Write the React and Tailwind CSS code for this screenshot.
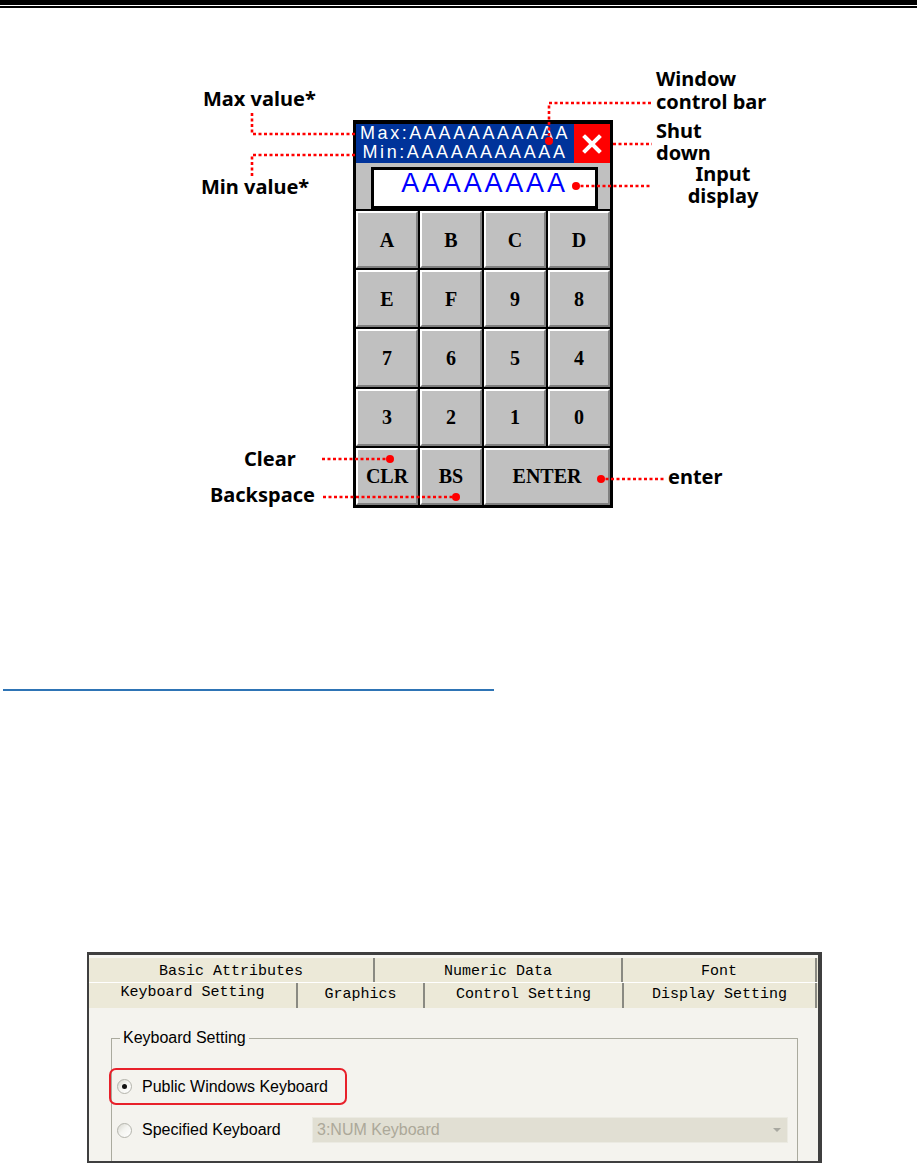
import React from "react";

const Key = ({ label, span }) => (
  <div
    className={
      "bg-[#c0c0c0] border-t-2 border-l-2 border-white border-b-2 border-r-2 border-b-[#808080] border-r-[#808080] flex items-center justify-center font-['Liberation_Serif',serif] font-bold text-[20px] text-black " +
      (span ? "col-span-2" : "")
    }
  >
    {label}
  </div>
);

const Radio = ({ checked }) => (
  <span className="w-[15px] h-[15px] rounded-full border border-[#b4b4ac] bg-[linear-gradient(135deg,#d6d6ce_0%,#f4f4f0_45%,#ffffff_100%)] flex items-center justify-center shrink-0">
    {checked && <span className="w-[5px] h-[5px] rounded-full bg-[#111111]" />}
  </span>
);

const Tab = ({ w, children }) => (
  <div
    style={{ width: w }}
    className="h-full flex items-center justify-center border-r-2 border-[#8a8a82] shrink-0"
  >
    {children}
  </div>
);

export default function App() {
  const keys = ["A", "B", "C", "D", "E", "F", "9", "8", "7", "6", "5", "4", "3", "2", "1", "0", "CLR", "BS"];
  return (
    <div className="relative w-[917px] h-[1164px] bg-white overflow-hidden">
      {/* header rules */}
      <div className="h-[5px] bg-black" />
      <div className="mt-[1px] h-[2px] bg-black" />

      {/* keyboard diagram */}
      <div className="h-[512px] pt-[112px] pl-[353px]">
        <div className="w-[260px] h-[388px] border-[3px] border-t-4 border-black bg-black flex flex-col">
          <div className="flex h-[39px] shrink-0">
            <div className="flex-1 bg-[#00339a] flex flex-col items-center text-white text-[18px] leading-[19px] tracking-[2.6px] font-['Liberation_Sans',Arial,sans-serif]">
              <span>Max:AAAAAAAAAAA</span>
              <span>Min:AAAAAAAAAAA</span>
            </div>
            <div className="w-[36px] bg-[#ff0000] flex items-center justify-center">
              <svg width="20" height="20" viewBox="0 0 20 20">
                <path d="M3 3 L17 17 M17 3 L3 17" stroke="#ffffff" strokeWidth="4" strokeLinecap="square" />
              </svg>
            </div>
          </div>
          <div className="h-[46px] shrink-0 bg-[#c0c0c0] pl-[15px] pr-[12px] pt-[4px]">
            <div className="h-[42px] border-[3px] border-black bg-white flex justify-center">
              <span className="text-[27px] leading-[27px] tracking-[2.8px] text-[#0000ff] font-['Liberation_Sans',Arial,sans-serif]">
                AAAAAAAA
              </span>
            </div>
          </div>
          <div className="flex-1 grid grid-cols-4 grid-rows-5 gap-[2px] pt-[2px]">
            {keys.map((k) => (
              <Key key={k} label={k} />
            ))}
            <Key label="ENTER" span />
          </div>
        </div>
      </div>

      {/* leader lines */}
      <svg className="absolute left-0 top-0 pointer-events-none" width="917" height="520">
        <g stroke="#ff0000" strokeWidth="2.6" strokeDasharray="3 2.5" fill="none">
          <polyline points="252,113 252,134 356,134" />
          <polyline points="252,176 252,155 356,155" />
          <polyline points="651,103 549,103 549,141" />
          <line x1="613" y1="144" x2="652" y2="144" />
          <line x1="575" y1="186" x2="650" y2="186" />
          <line x1="322" y1="459" x2="390" y2="459" />
          <line x1="323" y1="497" x2="456" y2="497" />
          <line x1="600" y1="479" x2="666" y2="479" />
        </g>
        <g fill="#ff0000">
          <circle cx="549" cy="141" r="4" />
          <circle cx="576" cy="186" r="4" />
          <circle cx="390" cy="459" r="4" />
          <circle cx="456" cy="497" r="4" />
          <circle cx="601" cy="479" r="4" />
        </g>
      </svg>

      {/* annotation labels */}
      <div className="absolute inset-0 pointer-events-none font-['Noto_Sans',sans-serif] font-bold text-[20px] text-black">
        <div className="absolute left-[203px] top-[87px] leading-[24px]">Max value*</div>
        <div className="absolute left-[201px] top-[175px] leading-[24px]">Min value*</div>
        <div className="absolute left-[656px] top-[67px] leading-[23px]">
          Window
          <br />
          control bar
        </div>
        <div className="absolute left-[656px] top-[120px] leading-[22px]">
          Shut
          <br />
          down
        </div>
        <div className="absolute left-[680px] w-[86px] top-[163px] leading-[22px] text-center">
          Input
          <br />
          display
        </div>
        <div className="absolute left-[244px] top-[447px] leading-[24px]">Clear</div>
        <div className="absolute left-[210px] top-[483px] leading-[24px]">Backspace</div>
        <div className="absolute left-[668px] top-[465px] leading-[24px]">enter</div>
      </div>

      {/* blue rule */}
      <div className="ml-[3px] mt-[169px] w-[491px] h-[2px] bg-[#2e74b5]" />

      {/* properties dialog */}
      <div className="ml-[87px] mt-[261px] w-[735px] h-[211px] border-t-[3px] border-l-2 border-b-2 border-r-4 border-[#3f3f3f] bg-[#f4f3ee] flex flex-col overflow-hidden">
        <div className="pt-[3px] bg-[#f7f6f1] shrink-0">
          <div className="flex h-[25px] bg-[#ece9d8] border-b border-white font-['Liberation_Mono',monospace] text-[15px] text-black">
            <Tab w={286}>
              <span className="mt-[4px]">Basic Attributes</span>
            </Tab>
            <Tab w={248}>
              <span className="mt-[4px]">Numeric Data</span>
            </Tab>
            <Tab w={194}>
              <span className="mt-[4px]">Font</span>
            </Tab>
          </div>
        </div>
        <div className="flex h-[25px] shrink-0 bg-[#ece9d8] font-['Liberation_Mono',monospace] text-[15px] text-black">
          <Tab w={209}>
            <span className="-mt-[5px]">Keyboard Setting</span>
          </Tab>
          <Tab w={127}>Graphics</Tab>
          <Tab w={199}>Control Setting</Tab>
          <Tab w={193}>Display Setting</Tab>
        </div>
        <div className="flex-1 pl-[22px] pt-[21px] font-['Liberation_Sans',Arial,sans-serif] text-[16px] text-black">
          <fieldset className="w-[687px] h-[200px] border border-[#aaaa9e] p-0 m-0">
            <legend className="ml-[8px] px-[3px] leading-[18px]">Keyboard Setting</legend>
            <div className="mt-[21px] -ml-[3px] w-[238px] h-[37px] border-2 border-[#e8202a] rounded-[7px] flex items-center pl-[6px] gap-[10px]">
              <Radio checked />
              <span>Public Windows Keyboard</span>
            </div>
            <div className="mt-[12px] h-[26px] flex items-center pl-[5px]">
              <Radio />
              <span className="ml-[10px] w-[170px] shrink-0">Specified Keyboard</span>
              <div className="w-[476px] h-[26px] bg-[#e1dfd3] border border-[#ebeae2] flex items-center pl-[4px] pr-[6px] text-[#aca899]">
                <span className="flex-1">3:NUM Keyboard</span>
                <svg width="8" height="5" viewBox="0 0 8 5">
                  <path d="M0 0 L8 0 L4 4 Z" fill="#a8a8a0" />
                </svg>
              </div>
            </div>
          </fieldset>
        </div>
      </div>
    </div>
  );
}
